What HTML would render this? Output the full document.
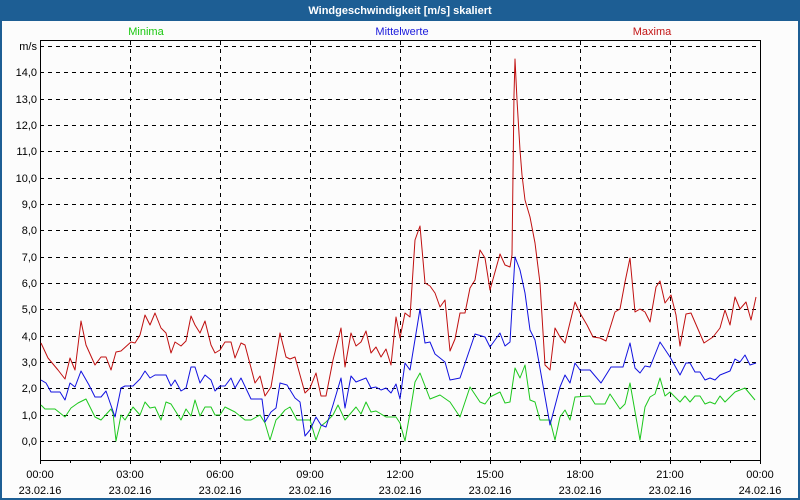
<!DOCTYPE html>
<html><head><meta charset="utf-8"><style>
html,body{margin:0;padding:0;width:800px;height:500px;overflow:hidden;background:#fff}
svg{display:block}
text{font-family:"Liberation Sans",sans-serif;font-size:11px}
</style></head><body>
<svg width="800" height="500" viewBox="0 0 800 500">
<rect x="0" y="0" width="800" height="500" fill="#1d5e94"/>
<rect x="2" y="21" width="796" height="477" fill="#fcfcfc"/>
<text x="400" y="14" fill="#fff" font-weight="bold" text-anchor="middle">Windgeschwindigkeit [m/s] skaliert</text>
<text x="146" y="35" fill="#19c80f" text-anchor="middle">Minima</text>
<text x="402" y="35" fill="#1a1adc" text-anchor="middle">Mittelwerte</text>
<text x="652" y="35" fill="#c21515" text-anchor="middle">Maxima</text>
<g stroke="#000" stroke-width="1" stroke-dasharray="4,4" shape-rendering="crispEdges">
<path d="M40 46.5H760M40 72.5H760M40 99.5H760M40 125.5H760M40 151.5H760M40 178.5H760M40 204.5H760M40 230.5H760M40 257.5H760M40 283.5H760M40 309.5H760M40 336.5H760M40 362.5H760M40 388.5H760M40 415.5H760M40 441.5H760"/>
<path d="M130.5 41V460M220.5 41V460M310.5 41V460M400.5 41V460M490.5 41V460M580.5 41V460M670.5 41V460"/>
</g>
<g stroke="#000" shape-rendering="crispEdges">
<rect x="40.5" y="40.5" width="720" height="420" fill="none" stroke-width="1.2"/>
<path d="M70.5 460V463M100.5 460V463M160.5 460V463M190.5 460V463M250.5 460V463M280.5 460V463M340.5 460V463M370.5 460V463M430.5 460V463M460.5 460V463M520.5 460V463M550.5 460V463M610.5 460V463M640.5 460V463M700.5 460V463M730.5 460V463M40.5 460V464M130.5 460V464M220.5 460V464M310.5 460V464M400.5 460V464M490.5 460V464M580.5 460V464M670.5 460V464M760.5 460V464"/>
</g>
<g fill="#000" text-anchor="end">
<text x="37" y="50">m/s</text>
<text x="37" y="76">14,0</text><text x="37" y="103">13,0</text><text x="37" y="129">12,0</text><text x="37" y="155">11,0</text><text x="37" y="182">10,0</text><text x="37" y="208">9,0</text><text x="37" y="234">8,0</text><text x="37" y="261">7,0</text><text x="37" y="287">6,0</text><text x="37" y="313">5,0</text><text x="37" y="340">4,0</text><text x="37" y="366">3,0</text><text x="37" y="392">2,0</text><text x="37" y="419">1,0</text><text x="37" y="445">0,0</text>
</g>
<g fill="#000" text-anchor="middle">
<text x="40" y="478">00:00</text><text x="40" y="494">23.02.16</text>
<text x="130" y="478">03:00</text><text x="130" y="494">23.02.16</text>
<text x="220" y="478">06:00</text><text x="220" y="494">23.02.16</text>
<text x="310" y="478">09:00</text><text x="310" y="494">23.02.16</text>
<text x="400" y="478">12:00</text><text x="400" y="494">23.02.16</text>
<text x="490" y="478">15:00</text><text x="490" y="494">23.02.16</text>
<text x="580" y="478">18:00</text><text x="580" y="494">23.02.16</text>
<text x="670" y="478">21:00</text><text x="670" y="494">23.02.16</text>
<text x="760" y="478">00:00</text><text x="760" y="494">24.02.16</text>
</g>
<g fill="none" stroke-width="1" stroke-linejoin="round">
<polyline stroke="#1ec81e" points="41,405 45,409 55,409 65,417 71,408 78,403 86,399 95,417 101,420 111,409 113,413 116,441 121,415 125,420 133,407 140,415 145,402 150,408 155,407 161,420 166,402 171,404 181,420 186,409 191,416 195,400 200,416 205,407 211,407 215,415 220,415 225,407 235,412 245,420 251,420 260,415 265,423 270,440 276,420 280,416 285,410 290,407 297,420 310,420 316,440 321,426 326,422 333,415 338,405 345,420 356,407 361,414 366,402 371,412 376,411 386,417 396,417 400,423 405,441 410,413 415,382 420,373 430,399 440,395 450,402 460,417 470,387 480,402 485,404 490,397 500,392 505,403 510,402 515,368 520,378 525,365 530,400 535,402 540,420 550,420 555,440 560,417 565,410 570,420 575,397 590,396 595,404 605,404 610,394 620,409 625,404 630,383 640,440 645,407 650,397 655,394 660,378 665,396 670,392 680,402 685,396 690,402 695,396 700,396 705,404 710,402 715,404 720,396 725,402 735,392 745,388 755,400"/>
<polyline stroke="#1212e0" points="41,380 46,383 51,392 60,392 65,400 70,383 75,387 81,371 89,385 95,397 101,397 106,391 115,417 121,388 125,386 133,386 140,379 145,371 150,378 155,375 166,375 171,386 175,380 181,391 186,388 191,367 195,367 200,383 205,375 211,380 215,391 220,386 225,386 231,378 235,388 241,378 251,399 262,399 265,422 271,412 276,408 280,383 287,385 295,398 300,402 305,436 310,430 316,417 321,425 326,427 333,405 341,378 345,408 351,376 356,382 366,378 371,388 376,387 381,390 386,388 391,393 396,384 400,399 405,363 410,370 420,309 425,343 430,342 435,354 445,362 450,380 460,378 475,334 485,337 490,347 500,333 505,346 510,342 515,257 520,270 525,293 530,330 535,340 550,425 560,387 565,375 570,383 575,363 580,370 590,370 601,383 611,367 623,367 630,343 635,368 640,373 645,366 650,367 660,342 670,357 680,375 686,363 690,363 695,372 700,372 705,380 710,378 715,380 720,375 730,371 735,359 740,362 745,355 750,365 756,363"/>
<polyline stroke="#c01010" points="41,343 48,358 58,370 65,379 70,358 75,370 81,321 86,345 95,365 101,357 106,357 111,370 116,352 121,351 131,342 135,343 140,335 145,315 150,325 155,313 161,328 166,333 171,353 175,342 181,346 186,341 191,316 195,325 200,333 205,321 211,345 215,353 220,350 225,342 231,342 235,358 241,343 245,345 255,383 260,376 265,396 271,387 280,333 286,357 290,359 295,357 305,393 310,388 316,373 321,396 326,396 333,360 341,328 345,367 351,333 356,346 361,342 366,331 371,353 376,347 381,357 386,349 391,365 396,317 400,338 405,313 410,317 415,240 420,226 425,283 430,286 435,293 440,307 445,300 450,351 455,339 460,313 465,313 470,288 475,280 480,250 485,258 490,290 495,272 500,254 505,265 510,267 512,255 514,95 515,59 517,100 520,150 522,175 525,200 530,217 535,243 540,283 545,365 550,370 555,328 560,337 565,343 575,302 580,313 587,325 593,337 600,338 606,341 615,312 620,309 625,282 630,258 635,312 640,309 645,312 650,322 656,287 660,281 665,303 671,295 676,315 680,346 686,314 691,313 704,343 713,337 720,328 725,310 730,325 735,297 740,309 746,302 751,320 756,297"/>
</g>
</svg>
</body></html>
